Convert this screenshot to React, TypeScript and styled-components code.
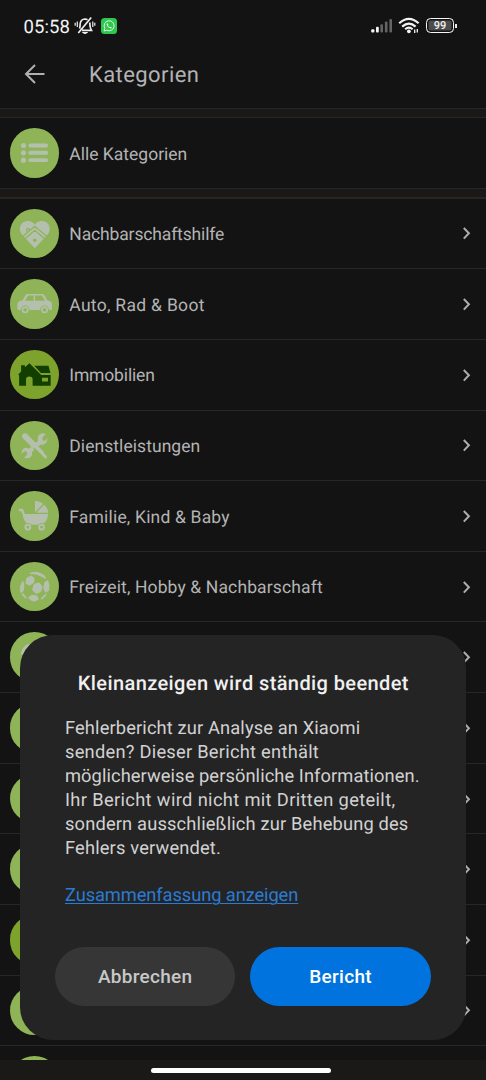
import React from 'react';
import styled, { createGlobalStyle } from 'styled-components';

const GlobalStyle = createGlobalStyle`
  * { box-sizing: border-box; }
  html, body { margin: 0; padding: 0; background: #121212; }
  body { font-family: Roboto, "Noto Sans", sans-serif; text-rendering: geometricPrecision; }
`;

const Screen = styled.div`
  position: relative;
  display: flex;
  flex-direction: column;
  width: 486px;
  height: 1080px;
  overflow: hidden;
  background: #131313;
  color: #b4b4b4;
`;

const StatusBar = styled.header`
  display: flex;
  align-items: center;
  height: 51px;
  padding: 0 29.3px 0 23.5px;
  color: #f4f4f4;
  flex: none;
`;

const Clock = styled.span`
  font-size: 18.5px;
  font-weight: 400;
  letter-spacing: 0.1px;
  line-height: 20px;
  width: 50px;
  padding-top: 2px;
  white-space: nowrap;
`;

const StatusIcons = styled.div`
  display: flex;
  align-items: center;
  margin-left: auto;
`;

const AppBar = styled.div`
  display: flex;
  align-items: center;
  height: 57px;
  padding: 0 0 11px 23px;
  flex: none;
`;

const AppTitle = styled.h1`
  margin: 0 0 0 42px;
  padding-top: 3px;
  font-size: 22px;
  font-weight: 400;
  line-height: 28px;
  letter-spacing: 0.42px;
  color: #b3b3b3;
`;

const Band = styled.div<{ $h: number; $end?: string }>`
  flex: none;
  height: ${(p) => p.$h}px;
  background: #1b1918;
  border-top: 1px solid #262626;
  border-bottom: ${(p) => p.$end ?? '1px solid #262626'};
`;

const List = styled.div`
  flex: 1;
  min-height: 0;
  overflow: hidden;
`;

const Row = styled.div<{ $h?: number; $line?: boolean }>`
  display: flex;
  flex: none;
  align-items: center;
  height: ${(p) => p.$h ?? 70.65}px;
  padding: 0 15px 0 9.8px;
  border-bottom: ${(p) => (p.$line === false ? 'none' : '1px solid #272727')};
`;

const Badge = styled.div<{ $dark?: boolean }>`
  width: 49.6px;
  height: 49.6px;
  flex: none;
  border-radius: 50%;
  background: ${(p) => (p.$dark ? '#7ea32d' : '#8fb458')};
  color: ${(p) => (p.$dark ? '#123f00' : '#b5bfae')};
  svg { display: block; width: 100%; height: 100%; }
`;

const Label = styled.span<{ $ls: number }>`
  flex: 1;
  margin-left: 9.9px;
  padding-top: 3.4px;
  font-size: 17.5px;
  line-height: 24px;
  letter-spacing: ${(p) => p.$ls}px;
  white-space: nowrap;
`;

const NavBar = styled.footer`
  display: flex;
  justify-content: center;
  flex: none;
  height: 20px;
  padding: 8px 4px 0 0;
  background: #1a1918;
`;

const Handle = styled.div`
  width: 180px;
  height: 5px;
  border-radius: 3px;
  background: #fff;
`;

const Dialog = styled.section`
  position: absolute;
  left: 20.4px;
  top: 635px;
  width: 445.4px;
  height: 405.3px;
  padding: 35px 35px 0 34.6px;
  border-radius: 33px;
  background: #242424;
`;

const DialogTitle = styled.h2`
  margin: 0;
  padding-left: 1px;
  text-align: center;
  font-size: 20px;
  font-weight: 500;
  line-height: 26px;
  letter-spacing: 0.4px;
  color: #f0f0f0;
  white-space: nowrap;
`;

const Message = styled.p`
  margin: 21.4px 0 0 10px;
  font-size: 18.3px;
  line-height: 23.9px;
  color: #d2d2d2;
`;

const Line = styled.span<{ $ls: number }>`
  display: block;
  letter-spacing: ${(p) => p.$ls}px;
  white-space: nowrap;
`;

const SummaryLink = styled.a`
  display: block;
  width: max-content;
  margin: 23.6px 0 0 10px;
  font-size: 18.3px;
  line-height: 24px;
  letter-spacing: -0.09px;
  color: #2a7bd4;
  text-decoration: underline;
  text-decoration-thickness: 1px;
  text-underline-offset: 2px;
`;

const Actions = styled.div`
  display: flex;
  gap: 15px;
  margin-top: 38.4px;
`;

const Button = styled.button<{ $primary?: boolean }>`
  flex: 1;
  height: 59.5px;
  padding: 0;
  border: 0;
  border-radius: 30px;
  font: 500 19px Roboto, sans-serif;
  letter-spacing: 0.3px;
  background: ${(p) => (p.$primary ? '#0073de' : '#363636')};
  color: ${(p) => (p.$primary ? '#fff' : '#c8c8c8')};
`;

const icons: Record<string, React.ReactNode> = {
  list: (
    <g fill="currentColor">
      {[17.6, 25, 32.4].map((y) => (
        <g key={y}>
          <circle cx="13.6" cy={y} r="2.6" />
          <rect x="18.6" y={y - 2} width="19.7" height="4" rx="1.6" />
        </g>
      ))}
    </g>
  ),
  heart: (
    <>
      <path fill="currentColor" d="M25 39.5 12.5 26.3C8.6 22 9.4 15.8 13.5 13.3C17.5 11 22.5 12 25 15.8C27.5 12 32.5 11 36.5 13.3C40.6 15.8 41.4 22 37.5 26.3Z" />
      <path fill="none" stroke="#8fb458" strokeWidth="1.2" d="M12.5 28 25 17.5 37.5 28M14.8 30.2 25 21.5 35.2 30.2M17 23.5V20H19.5V21.5" />
      <circle cx="25" cy="31.5" r="1.8" fill="#8fb458" />
    </>
  ),
  car: (
    <>
      <path fill="currentColor" fillRule="evenodd" d="M17.5 15H32.5Q34 15 34.7 16.4L37.5 21.4L40.5 22.5Q42.3 23.2 42.3 25.5V30Q42.3 31.2 41 31.2H8.8Q7.5 31.2 7.5 30V25.5Q7.5 23.2 9.5 22.5L12.7 21.4L15.6 16.4Q16.3 15 17.5 15ZM18.2 16.6 15.3 22H23.8V16.6ZM25.3 16.6V22H35.2L32.2 16.6Z" />
      {[15.3, 34.8].map((x) => (
        <g key={x}>
          <circle cx={x} cy="31" r="4.4" fill="#8fb458" />
          <circle cx={x} cy="31" r="2.7" fill="none" stroke="currentColor" strokeWidth="1.7" />
        </g>
      ))}
    </>
  ),
  house: (
    <g fill="currentColor">
      <path d="M11.2 15.5H15V17.5L19.6 13.3 31.3 25V36H22.8V29.5Q22.8 26.8 19.5 26.8T16.2 29.5V36H9.2V25.5L8.3 24.8 11.2 21.8Z" />
      <path d="M24.5 16H38.8L40.8 23.3H31.2Z" />
      <path fillRule="evenodd" d="M30.5 25.3H41V36H30.5ZM32.3 28V31.8H38.3V28Z" />
    </g>
  ),
  tools: (
    <g fill="currentColor">
      <path d="M12.5 13.6Q14.5 11.4 17 12.8L27 23.2Q27.8 24.5 26.8 25.6L33.5 32.3 35.3 33.3 37.6 36.6 36 38 32.8 35.5 31.8 33.7 25.2 27.2Q24 28.1 22.7 27.2L12.8 17.2Q11.3 15.4 12.5 13.6Z" />
      <path d="M26 25.5 33.3 32.8" stroke="currentColor" strokeWidth="3.4" />
      <path d="M36.2 13.2 32.5 16.8 33.2 19.6 35.8 20 37.5 17Q38.2 20.8 35.4 22.9Q33.3 24.4 30.8 23.6L28.5 25.8 25.3 22.5 28.3 20Q27 15.8 30 13.5Q32.8 11.6 36.2 13.2Z" />
      <path d="M21.6 26 24.5 28.9 22.2 31.2Q23 34.4 20.8 36.3Q17.8 38.6 14.2 37L17.6 33.6 16.8 30.9 14.3 30.5 11.8 33.3Q11.3 29.5 13.9 27.6Q16.1 26 18.9 28.1Z" />
    </g>
  ),
  pram: (
    <>
      <path fill="currentColor" d="M9 18H13L15 23.2H38.3Q38.3 29.5 34 32.5V34H16.5V32Q13.3 29.3 12.8 24L11.3 20.3H9Z" />
      <path fill="currentColor" d="M25.2 10V21.5L33.6 12.8Q29.8 9.8 25.2 10ZM34.5 13.8 26.5 22H38.5Q38.3 17 34.5 13.8Z" />
      {[18, 31.8].map((x) => (
        <g key={x}>
          <circle cx={x} cy="36.5" r="4.2" fill="#8fb458" />
          <circle cx={x} cy="36.5" r="2.4" fill="none" stroke="currentColor" strokeWidth="2" />
        </g>
      ))}
    </>
  ),
  ball: (
    <g fill="currentColor" stroke="currentColor" strokeWidth="1" strokeLinejoin="round">
      <path d="M24.2 22.7 29 21 32.2 24.5 31 29.8 26.5 31.8 22.8 28.3Z" />
      <path d="M17 16.3 21.5 14.2 24.4 16.5 24 20.5 19.8 23.5 16 21.5Z" />
      <path d="M35.2 20.5 38 18.8Q40 23.5 39 28.5L36 30.5 34 26.5Z" />
      <path d="M18.5 36 22 33.5 27 34.2 28.5 37.5 24.5 39.5Q21 39 18.5 36Z" />
      <path d="M10.5 25 13 19.5 14 23.5 13.3 29 11.2 31Q10 28 10.5 25Z" />
      <path d="M20 11.5Q27.5 8.5 34.5 13.8L36 16.5 32 14.5 27 12.3Z" />
      <path d="M12 32.5 13.5 32 16.5 36.5Q14 35.5 12 32.5ZM31.5 36.5 35.5 32.8 36.5 32.5Q34.5 36.5 31.5 37.5Z" />
    </g>
  ),
  shirt: <path fill="currentColor" d="M11 22Q12 15 18 12H32L39 22 35 26V38H15V27Z" />,
};

const Glyph = ({ name }: { name: string }) => (
  <svg viewBox="0 0 50 50">{icons[name]}</svg>
);

const Chevron = () => (
  <svg width="9" height="14" viewBox="0 0 9 14" fill="none">
    <path d="M1.8 2 6.9 7.3 1.8 12.6" stroke="#adadad" strokeWidth="2" />
  </svg>
);

const categories = [
  { label: 'Nachbarschaftshilfe', icon: 'heart', ls: -0.14 },
  { label: 'Auto, Rad & Boot', icon: 'car', ls: 0.3 },
  { label: 'Immobilien', icon: 'house', ls: -0.15, dark: true },
  { label: 'Dienstleistungen', icon: 'tools', ls: 0.06 },
  { label: 'Familie, Kind & Baby', icon: 'pram', ls: 0.18 },
  { label: 'Freizeit, Hobby & Nachbarschaft', icon: 'ball', ls: 0.13 },
  { label: '', icon: 'shirt', ls: 0 },
  { label: '', icon: '', ls: 0 },
  { label: '', icon: '', ls: 0 },
  { label: '', icon: '', ls: 0 },
  { label: '', icon: '', ls: 0, dark: true },
  { label: '', icon: '', ls: 0 },
  { label: '', icon: '', ls: 0 },
];

const lines: [string, number][] = [
  ['Fehlerbericht zur Analyse an Xiaomi', 0.13],
  ['senden? Dieser Bericht enthält', 0.25],
  ['möglicherweise persönliche Informationen.', 0.08],
  ['Ihr Bericht wird nicht mit Dritten geteilt,', 0.35],
  ['sondern ausschließlich zur Behebung des', 0.16],
  ['Fehlers verwendet.', 0.16],
];

const BellOff = () => (
  <svg width="22" height="20" viewBox="0 0 22 20" fill="none" stroke="#eee" strokeWidth="1.7">
    <path d="M5.5 12.5C6.3 11 6 9 6.2 7.5Q6.8 3.2 11 3Q12.5 3 13.5 3.7M15.7 6.5Q16 8 16 10Q16.2 12 17.5 14.3H8M4.3 17 17.2 1.5" />
    <path d="M8.5 16.5H13.5Q11 18.6 8.5 16.5Z" fill="#eee" strokeWidth="1" />
    <path d="M3.3 5.5V11M1.2 6.8V9.7M18.8 5.5V11M20.8 6.8V9.7" strokeWidth="1.2" />
  </svg>
);

const AppIcon = styled.svg`
  margin-left: 5.5px;
`;

const WhatsApp = () => (
  <AppIcon width="16" height="16" viewBox="0 0 16 16">
    <rect width="16" height="16" rx="3.5" fill="#2fc84f" />
    <path d="M3 13 3.8 10.3A5 5 0 1 1 5.8 12.2Z" fill="none" stroke="#d9f7dc" strokeWidth="1" />
    <path d="M6 5.3Q5 6.3 6.3 8.2T9.8 10.5Q10.8 10.3 10.8 9.4L9.4 8.7 8.7 9.3Q7.3 8.6 6.9 7.5L7.4 6.9 6.9 5.4Z" fill="#e6fbe8" />
  </AppIcon>
);

const Signal = () => (
  <svg width="23" height="16" viewBox="0 0 23 16">
    <rect x="0.2" y="11.3" width="3.2" height="3.2" rx="1" fill="#f4f4f4" />
    <rect x="5" y="8.8" width="2.8" height="5.7" rx="1" fill="#f4f4f4" />
    <rect x="9.4" y="6.3" width="2.6" height="8.2" rx="1" fill="#646464" />
    <rect x="13.9" y="3.6" width="2.6" height="10.9" rx="1" fill="#646464" />
    <rect x="18.4" y="1" width="2.6" height="13.5" rx="1" fill="#646464" />
  </svg>
);

const WifiIcon = styled.svg`
  margin-left: 3.6px;
`;

const Wifi = () => (
  <WifiIcon width="22" height="17" viewBox="0 0 22 17" fill="none" stroke="#f4f4f4">
    <path d="M1.2 6.3Q10.9 -2.5 20.6 6.3M4.2 9.6Q10.9 3.5 17.6 9.6M7.2 12.3Q10.9 9 14.6 12.3" strokeWidth="2.2" />
    <circle cx="10.9" cy="14.3" r="1.9" fill="#f4f4f4" stroke="none" />
    <path d="M16.7 12.5V16M19.3 12V15.5" strokeWidth="1.3" />
  </WifiIcon>
);

const BatteryShell = styled.div`
  display: flex;
  align-items: center;
  width: 31px;
  margin-left: 5.9px;
`;

const BatteryBody = styled.div`
  display: flex;
  align-items: center;
  justify-content: center;
  flex: none;
  width: 28.5px;
  height: 14.5px;
  border: 1.5px solid #f4f4f4;
  border-radius: 4.5px;
  background: #4c4c4c;
  box-shadow: inset 0 0 0 1.5px #131313;
  font-size: 11px;
  font-weight: 500;
  line-height: 12px;
`;

const BatteryTip = styled.div`
  flex: none;
  width: 1.5px;
  height: 4px;
  margin-left: 1px;
  background: #e8e8e8;
`;

export default function App() {
  return (
    <Screen>
      <GlobalStyle />
      <StatusBar>
        <Clock>05:58</Clock>
        <BellOff />
        <WhatsApp />
        <StatusIcons>
          <Signal />
          <Wifi />
          <BatteryShell>
            <BatteryBody>99</BatteryBody>
            <BatteryTip />
          </BatteryShell>
        </StatusIcons>
      </StatusBar>
      <AppBar>
        <svg width="24" height="22" viewBox="0 0 24 22" fill="none" stroke="#b0b0b0" strokeWidth="2">
          <path d="M21.5 11H3.5M12 2 3 11 12 20" />
        </svg>
        <AppTitle>Kategorien</AppTitle>
      </AppBar>
      <Band $h={10} />
      <Row $h={70} $line={false}>
        <Badge><Glyph name="list" /></Badge>
        <Label $ls={0}>Alle Kategorien</Label>
      </Row>
      <Band $h={10.6} $end="2px solid #272624" />
      <List>
        {categories.map((c, i) => (
          <Row key={i}>
            <Badge $dark={c.dark}><Glyph name={c.icon} /></Badge>
            <Label $ls={c.ls}>{c.label}</Label>
            <Chevron />
          </Row>
        ))}
      </List>
      <NavBar><Handle /></NavBar>
      <Dialog>
        <DialogTitle>Kleinanzeigen wird ständig beendet</DialogTitle>
        <Message>
          {lines.map(([text, ls]) => (
            <Line key={text} $ls={ls}>{text}</Line>
          ))}
        </Message>
        <SummaryLink>Zusammenfassung anzeigen</SummaryLink>
        <Actions>
          <Button>Abbrechen</Button>
          <Button $primary>Bericht</Button>
        </Actions>
      </Dialog>
    </Screen>
  );
}
